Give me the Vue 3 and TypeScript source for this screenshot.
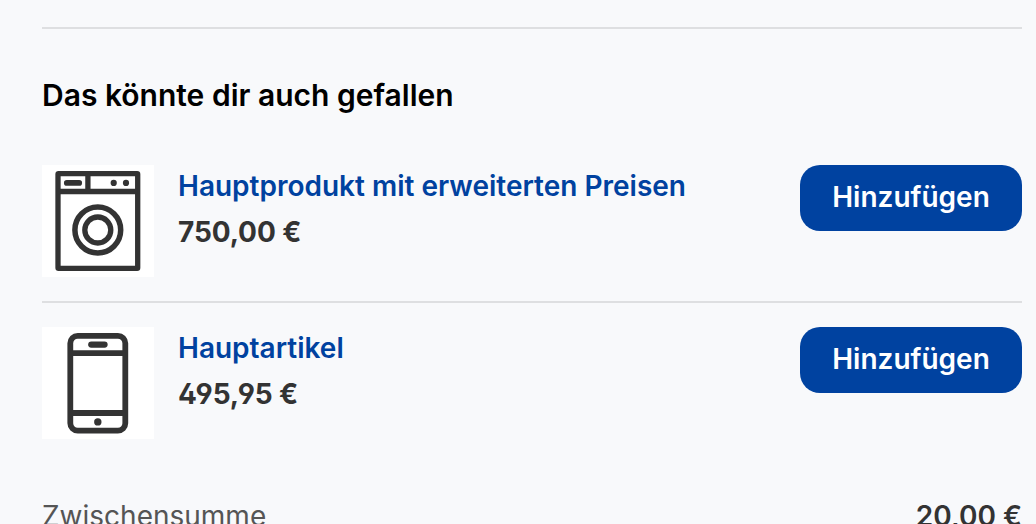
<script setup lang="ts">
interface Product {
  id: number
  name: string
  price: string
  icon: 'washer' | 'phone'
}

const products: Product[] = [
  { id: 1, name: 'Hauptprodukt mit erweiterten Preisen', price: '750,00 €', icon: 'washer' },
  { id: 2, name: 'Hauptartikel', price: '495,95 €', icon: 'phone' },
]
</script>

<template>
  <main class="cart">
    <section class="suggestions">
      <h2 class="heading">Das könnte dir auch gefallen</h2>
      <ul class="list">
        <li v-for="product in products" :key="product.id" class="item">
          <div class="thumb">
            <svg v-if="product.icon === 'washer'" viewBox="0 0 112 112" fill="none" stroke="#333" stroke-width="5.3">
              <rect x="16" y="8.7" width="79.7" height="94.7" rx="0.6" />
              <path d="M16 26.5H95.7M45.9 8.7V26.5" />
              <path d="M24.8 17.9H37.2" stroke-width="5.7" stroke-linecap="round" />
              <circle cx="55.8" cy="65" r="22.9" stroke-width="5.5" />
              <circle cx="55.8" cy="65" r="13" stroke-width="5.3" />
              <g fill="#333" stroke="none">
                <circle cx="71.7" cy="17.9" r="3.1" />
                <circle cx="84" cy="17.9" r="3.1" />
              </g>
            </svg>
            <svg v-else viewBox="0 0 112 112" fill="none" stroke="#333" stroke-width="5.8">
              <rect x="28.3" y="8.9" width="55" height="94.8" rx="7.4" />
              <path d="M28.3 26.1H83.3M28.3 86H83.3" />
              <path d="M49.3 17.6H62.5" stroke-width="6.3" stroke-linecap="round" />
              <circle cx="55.8" cy="94.9" r="3.7" fill="#333" stroke="none" />
            </svg>
          </div>
          <div class="info">
            <a class="name">{{ product.name }}</a>
            <span class="price">{{ product.price }}</span>
          </div>
          <button class="add" type="button">Hinzufügen</button>
        </li>
      </ul>
    </section>
    <div class="subtotal">
      <span class="label">Zwischensumme</span>
      <span class="amount">20,00 €</span>
    </div>
  </main>
</template>

<style>
html,
body {
  background: #f8f9fb;
  overflow: hidden;
}
</style>

<style scoped>
.cart {
  box-sizing: border-box;
  height: 524px;
  overflow: hidden;
  padding: 27px 14px 0 42px;
  background: #f8f9fb;
  font-family: Inter, "Liberation Sans", sans-serif;
  font-size: 28px;
  color: #333;
}
.suggestions {
  border-top: 2px solid #dedfe1;
  padding-top: 47px;
}
.heading {
  margin: 0;
  font-size: 30px;
  line-height: 38px;
  font-weight: 600;
  color: #000;
}
.list {
  list-style: none;
  margin: 27px 0 0;
  padding: 0;
}
.item {
  display: flex;
  align-items: flex-start;
  padding: 24px 0;
}
.item + .item {
  border-top: 2px solid #dedfe1;
}
.thumb {
  width: 112px;
  height: 112px;
  background: #fff;
}
.thumb svg {
  display: block;
  width: 112px;
  height: 112px;
}
.info {
  flex: 1;
  display: flex;
  flex-direction: column;
  margin-left: 24px;
  line-height: 42px;
  white-space: nowrap;
}
.name {
  color: #0042a0;
  font-weight: 600;
}
.price {
  margin-top: 4px;
  font-weight: 700;
  letter-spacing: -0.1px;
  font-feature-settings: "ss01", "cv02", "cv03", "cv04";
}
.add {
  width: 222px;
  height: 66px;
  border: 0;
  border-radius: 20px;
  padding: 0 0 2px;
  background: #0042a0;
  color: #fff;
  font: 600 28px/64px Inter, "Liberation Sans", sans-serif;
}
.subtotal {
  display: flex;
  justify-content: space-between;
  margin-top: 32px;
  line-height: 42px;
}
.label {
  color: #555;
}
.amount {
  font-weight: 600;
}
</style>
